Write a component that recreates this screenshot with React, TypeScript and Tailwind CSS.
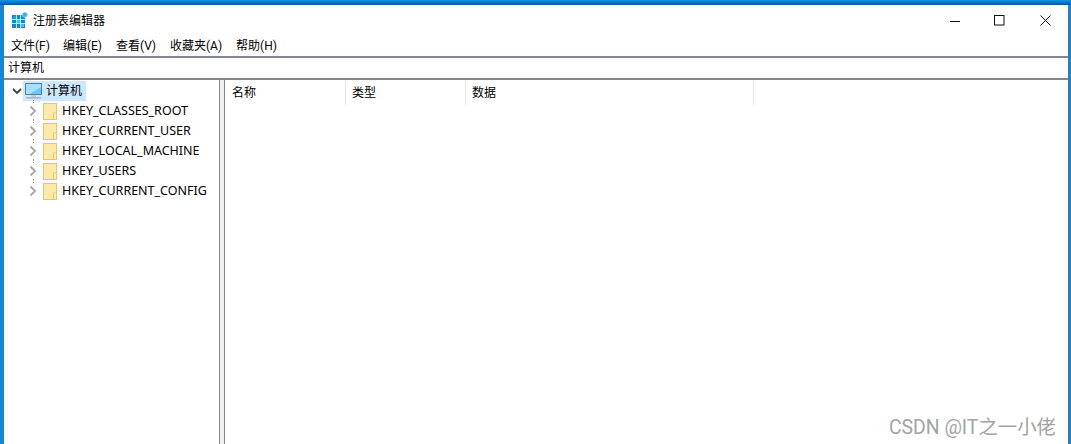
const cjk = { fontFamily: 'Roboto,"Noto Sans CJK SC",sans-serif' };
const seg = { fontFamily: '"Noto Sans","Noto Sans CJK SC",sans-serif' };

function Chevron() {
  return (
    <svg width="8" height="12" viewBox="0 0 8 12" className="shrink-0">
      <path d="M1.5 1.5 L6 6 L1.5 10.5" fill="none" stroke="#a6a6a6" strokeWidth="1.8" />
    </svg>
  );
}

function Folder() {
  return (
    <svg width="14" height="17" viewBox="0 0 14 17" className="shrink-0">
      <rect x="0.5" y="0.5" width="13" height="16" fill="#fde9a8" stroke="#e8c56c" />
      <path d="M10.5 16.5 V10 H13.5" fill="#fff3c4" stroke="#e8c56c" />
    </svg>
  );
}

function Monitor() {
  return (
    <svg width="18" height="17" viewBox="0 0 18 17" className="shrink-0">
      <rect x="0.5" y="0.5" width="16" height="11" fill="#6cc5f2" stroke="#5a7f9c" />
      <path d="M1 1 H16 V4 L5 11 H1 Z" fill="#a6e0fa" />
      <rect x="6" y="12" width="5" height="2" fill="#c2cdd6" />
      <rect x="1" y="14" width="15" height="1.5" fill="#aab4bd" />
    </svg>
  );
}

function AppIcon() {
  return (
    <svg width="16" height="16" viewBox="0 0 16 16" className="shrink-0">
      <rect x="0" y="3" width="13" height="13" fill="#1287c9" />
      <rect x="1" y="4" width="3" height="3" fill="#1b9bdc" />
      <rect x="5" y="8" width="3" height="3" fill="#49bdee" />
      <rect x="9" y="12" width="3" height="3" fill="#49bdee" />
      <path d="M4.5 3 V16 M8.5 3 V16 M0 7.5 H13 M0 11.5 H13" stroke="#d5edfa" strokeWidth="0.9" />
      <circle cx="12.8" cy="2.8" r="2.5" fill="#38aee6" stroke="#9ed6f2" strokeWidth="0.8" />
    </svg>
  );
}

const keys = ["HKEY_CLASSES_ROOT", "HKEY_CURRENT_USER", "HKEY_LOCAL_MACHINE", "HKEY_USERS", "HKEY_CURRENT_CONFIG"];
const menus = ["文件(F)", "编辑(E)", "查看(V)", "收藏夹(A)", "帮助(H)"];

export default function App() {
  return (
    <div className="h-[444px] w-[1071px] overflow-hidden bg-[linear-gradient(#1095e5_0px,#0a52a8_5px,#0a8ae0_5px)] pl-[3px] pr-[2px] pt-[5px] text-[12px] text-black" style={cjk}>
      <div className="relative flex h-[439px] flex-col border-x border-[#54708c] bg-white">
        <div className="flex h-[31px] shrink-0 items-center">
          <div className="ml-[8px] -translate-y-[1px]"><AppIcon /></div>
          <span className="ml-[5px]">注册表编辑器</span>
          <div className="ml-auto flex items-center">
            <svg width="10" height="10" viewBox="0 0 10 10" className="mr-[34px]"><path d="M0 5.5 H10" stroke="#111" /></svg>
            <svg width="11" height="11" viewBox="0 0 11 11" className="mr-[35px]"><rect x="0.5" y="0.5" width="9.5" height="9.5" fill="none" stroke="#111" /></svg>
            <svg width="11" height="11" viewBox="0 0 11 11" className="mr-[17px]"><path d="M0.5 0.5 L10.5 10.5 M10.5 0.5 L0.5 10.5" stroke="#111" /></svg>
          </div>
        </div>
        <div className="flex h-[20px] shrink-0 items-center gap-[14px] pl-[7px]">
          {menus.map((m, i) => <span key={m} className={i === 0 ? "-mr-[1px]" : ""}>{m}</span>)}
        </div>
        <div className="flex h-[24px] shrink-0 items-center border-y-2 border-[#828790] pb-[1px] pl-[4px]">计算机</div>
        <div className="flex min-h-0 flex-1">
          <div className="w-[215px] shrink-0 pl-[4px] pt-[1px]">
            <div className="relative flex h-[20px] items-center">
              <svg width="10" height="7" viewBox="0 0 10 7" className="ml-[4px] shrink-0"><path d="M1 1 L5 5 L9 1" fill="none" stroke="#404040" strokeWidth="1.8" /></svg>
              <div className="ml-[1px] flex h-[20px] w-[63px] items-center bg-[#cce8ff] pl-[2px]">
                <Monitor />
                <span className="ml-[3px]">计算机</span>
              </div>
              <div className="absolute -bottom-[2px] left-[25px] h-[3px] border-l border-dotted border-[#999]" />
            </div>
            {keys.map((k, i) => (
              <div key={k} className="relative flex h-[20px] items-center text-[12.5px]" style={seg}>
                <div className="ml-[21px]"><Chevron /></div>
                <div className="ml-[6px]"><Folder /></div>
                <span className="ml-[5px]">{k}</span>
                {i < 4 && <div className="absolute -bottom-[2px] left-[25px] h-[4px] border-l border-dotted border-[#999]" />}
              </div>
            ))}
          </div>
          <div className="w-[6px] shrink-0 border-x border-[#828790] bg-[#f0f0f0]" />
          <div className="min-w-0 flex-1">
            <div className="flex h-[25px] items-center">
              <div className="flex h-[25px] w-[121px] items-center border-r border-[#e5e5e5] pl-[7px]">名称</div>
              <div className="flex h-[25px] w-[120px] items-center border-r border-[#e5e5e5] pl-[6px]">类型</div>
              <div className="flex h-[25px] w-[288px] items-center border-r border-[#e5e5e5] pl-[6px]">数据</div>
            </div>
          </div>
        </div>
        <div className="absolute bottom-[2px] right-[12px] text-[19.4px] leading-[28px] text-[#a3a3a3]">CSDN @IT之一小佬</div>
      </div>
    </div>
  );
}
